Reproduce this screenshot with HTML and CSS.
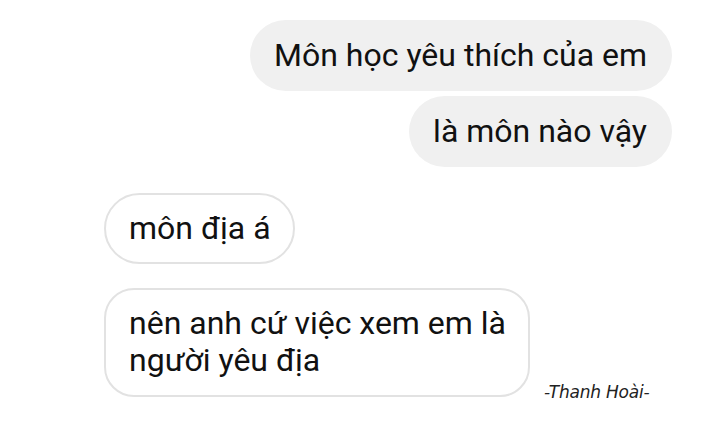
FILE: index.html
```html
<!DOCTYPE html>
<html lang="vi">
<head>
<meta charset="utf-8">
<link rel="stylesheet" href="styles.css">
</head>
<body>
<div class="chat">
  <div class="group sent">
    <div class="bubble grey">Môn học yêu thích của em</div>
    <div class="bubble grey">là môn nào vậy</div>
  </div>
  <div class="group received">
    <div class="bubble outline">môn địa á</div>
    <div class="last-row">
      <div class="bubble outline multi">nên anh cứ việc xem em là<br>người yêu địa</div>
      <div class="signature">-Thanh Hoài-</div>
    </div>
  </div>
</div>
</body>
</html>
```
FILE: styles.css
```css
html, body {
  margin: 0;
  padding: 0;
  background: #ffffff;
}
.chat {
  width: 720px;
  height: 429px;
  box-sizing: border-box;
  padding: 20px 48px 0 104px;
  font-family: Roboto, "Noto Sans", sans-serif;
  color: #111111;
  display: flex;
  flex-direction: column;
}
.group {
  display: flex;
  flex-direction: column;
  gap: 5px;
}
.sent {
  align-items: flex-end;
}
.received {
  margin-top: 26px;
  align-items: flex-start;
  gap: 24px;
}
.bubble {
  font-size: 32px;
  line-height: 37px;
  padding: 17px 25px 17px;
  border-radius: 36px;
  box-sizing: border-box;
}
.grey {
  background: #f0f0f0;
  padding-left: 24px;
}
.outline {
  background: #ffffff;
  border: 2px solid #e2e2e2;
  padding: 15px 22px 15px 23px;
}
.multi {
  border-radius: 30px;
  padding-bottom: 16px;
}
.last-row {
  display: flex;
  align-items: flex-end;
  gap: 14px;
}
.signature {
  font-family: "DejaVu Sans", sans-serif;
  font-weight: 200;
  font-style: italic;
  font-size: 17px;
  letter-spacing: -0.2px;
  color: #222;
  margin-bottom: -5px;
}
```
